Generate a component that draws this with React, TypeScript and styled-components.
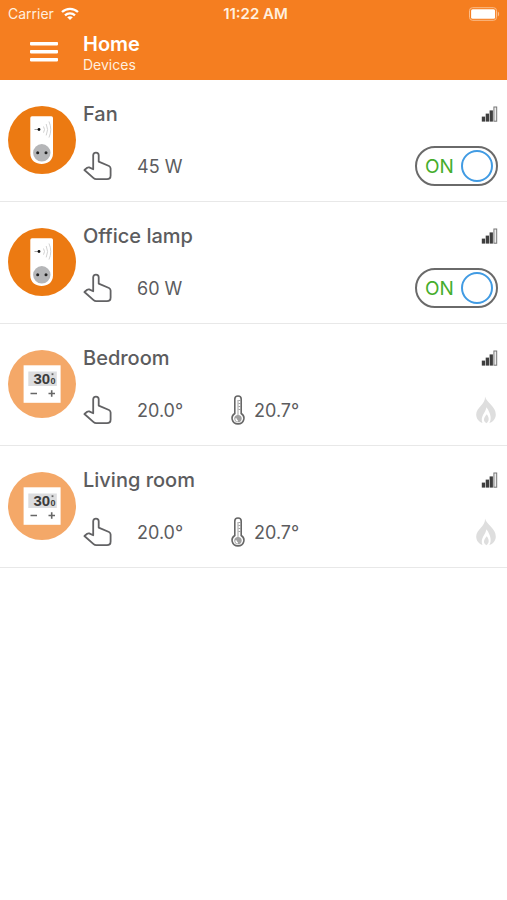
import React, { useState } from 'react';
import styled, { createGlobalStyle } from 'styled-components';

const GlobalStyle = createGlobalStyle`
  * { box-sizing: border-box; }
  body {
    margin: 0;
    background: #ffffff;
    color: #5c5c5e;
    font-family: Inter, "Liberation Sans", sans-serif;
  }
`;

const Header = styled.header`
  background: #f57e20;
  color: #ffffff;
  padding-bottom: 5px;
`;

const StatusBar = styled.div`
  display: grid;
  grid-template-columns: 1fr auto 1fr;
  align-items: center;
  height: 27px;
  padding: 0 7px 0 8px;
  font-size: 14px;
  color: #ffefdf;
`;

const Carrier = styled.div`
  display: flex;
  align-items: center;
  gap: 7px;
`;

const Clock = styled.time`
  padding-left: 3px;
  font-size: 15px;
  font-weight: 600;
`;

const BatterySlot = styled.div`
  display: flex;
  justify-content: flex-end;
`;

const TitleBar = styled.div`
  display: flex;
  align-items: center;
  height: 48px;
`;

const MenuButton = styled.button`
  display: flex;
  justify-content: center;
  width: 83px;
  padding: 2px 0 0 4px;
  border: 0;
  background: none;
  color: inherit;
  cursor: pointer;
`;

const PageTitle = styled.h1`
  margin: 0;
  font-size: 20px;
  line-height: 24px;
  font-weight: 600;
  padding-top: 3px;
`;

const PageSubtitle = styled.p`
  margin: 0;
  font-size: 14px;
  line-height: 18px;
  color: #ffefdf;
`;

const DeviceList = styled.ul`
  margin: 0;
  padding: 0;
  list-style: none;
`;

const DeviceRow = styled.li`
  display: flex;
  align-items: flex-start;
  gap: 7px;
  padding: 16px 9px 15px 8px;
  border-bottom: 1px solid #e8e8e8;
`;

const Avatar = styled.div<{ $muted: boolean }>`
  display: flex;
  align-items: center;
  justify-content: center;
  flex: none;
  width: 68px;
  height: 68px;
  margin-top: 10px;
  border-radius: 50%;
  background: ${(p) => (p.$muted ? '#f4a868' : '#ec7a12')};
`;

const DeviceBody = styled.div`
  flex: 1;
  min-width: 0;
`;

const DeviceLine = styled.div<{ $height: number }>`
  display: flex;
  align-items: center;
  justify-content: space-between;
  height: ${(p) => p.$height}px;
`;

const StatusLine = styled(DeviceLine)`
  margin-top: 14px;
`;

const DeviceName = styled.h2`
  margin: 0;
  font-size: 20px;
  font-weight: 500;
`;

const Readings = styled.div`
  display: flex;
  align-items: center;
`;

const Setting = styled.div`
  display: flex;
  align-items: center;
  gap: 25px;
  width: 148px;
  font-size: 18px;
`;

const Measured = styled.div`
  display: flex;
  align-items: center;
  gap: 9px;
  font-size: 18px;
`;

const Switch = styled.label<{ $on: boolean }>`
  position: relative;
  display: flex;
  flex-direction: ${(p) => (p.$on ? 'row' : 'row-reverse')};
  align-items: center;
  justify-content: space-between;
  width: 83px;
  height: 40px;
  padding: 0 3px 0 8px;
  border: 2px solid #6a6a6a;
  border-radius: 20px;
  color: ${(p) => (p.$on ? '#45ad2c' : '#8a8a8a')};
  font-size: 19px;
  cursor: pointer;
`;

const SwitchInput = styled.input`
  position: absolute;
  inset: 0;
  width: 100%;
  height: 100%;
  margin: 0;
  opacity: 0;
  cursor: pointer;
`;

const Knob = styled.span`
  width: 32px;
  height: 32px;
  border: 2px solid #419be3;
  border-radius: 50%;
`;

const FlameSlot = styled.div`
  display: flex;
  padding-right: 2px;
`;

const WifiIcon = () => (
  <svg width="18" height="14" viewBox="0 0 18 14" fill="none" stroke="#fff" strokeWidth="2.3" aria-hidden="true">
    <path d="M1 5C5.5 .7 12.5 .7 17 5" />
    <path d="M4 8.3C6.8 5.7 11.2 5.7 14 8.3" />
    <path d="M9 13L6.2 10.2C7.8 8.9 10.2 8.9 11.8 10.2Z" fill="#fff" stroke="none" />
  </svg>
);

const BatteryIcon = () => (
  <svg width="32" height="14" viewBox="0 0 32 14" aria-hidden="true">
    <rect x="1.5" y=".7" width="27" height="12.6" rx="3" fill="none" stroke="#fbbd8b" strokeWidth="1" />
    <rect x="3.1" y="2.3" width="24" height="9.4" rx="1.5" fill="#fff" />
    <path d="M29.8 4.5C31.6 5.3 31.6 8.7 29.8 9.5Z" fill="#fbbd8b" />
  </svg>
);

const MenuIcon = () => (
  <svg width="28" height="20" viewBox="0 0 28 20" fill="#fff" aria-hidden="true">
    <rect y="0" width="28" height="3.4" rx=".8" />
    <rect y="8" width="28" height="3.4" rx=".8" />
    <rect y="16" width="28" height="3.4" rx=".8" />
  </svg>
);

const PlugIcon = () => (
  <svg width="68" height="68" viewBox="0 0 68 68" aria-hidden="true">
    <path d="M22.3 12Q22.3 10.3 24 10.3H43.3Q45 10.3 45 12V47.5C45 61.5 22.3 61.5 22.3 47.5Z" fill="#fff" />
    <circle cx="33.8" cy="46.8" r="8.7" fill="#b5b6b8" />
    <circle cx="29.7" cy="46.8" r="1.5" fill="#222" />
    <circle cx="38" cy="46.8" r="1.5" fill="#222" />
    <path d="M26.5 23.5H31" stroke="#999" strokeWidth=".9" />
    <circle cx="31" cy="23.5" r="1.4" fill="#111" />
    <g fill="none" stroke="#cccccc" strokeWidth=".9">
      <path d="M35.5 20.5Q37.5 23.5 35.5 26.7" />
      <path d="M38.2 18Q41 23.5 38.2 29.4" />
      <path d="M41 15.5Q44.5 23.5 41 31.5" />
    </g>
  </svg>
);

const ThermostatIcon = () => (
  <svg width="68" height="68" viewBox="0 0 68 68" aria-hidden="true">
    <rect x="15.6" y="15.3" width="37" height="37.5" fill="#fff" />
    <rect x="20.3" y="21.5" width="28.5" height="14.5" fill="#dcdddf" />
    <g fontFamily="'Liberation Sans Narrow', 'Liberation Sans', sans-serif" fontWeight="700" fill="#3c3c3c">
      <text x="25.4" y="34.4" fontSize="15">30</text>
      <text x="42.6" y="34.4" fontSize="9">0</text>
    </g>
    <rect x="43.6" y="23.3" width="1.8" height="1.8" fill="#666" />
    <path d="M22.5 43.5H29M40.5 43.5H47M43.7 40.3V46.7" stroke="#666" strokeWidth="1.6" />
  </svg>
);

const HandIcon = () => (
  <svg width="29" height="30" viewBox="0 0 29 30" fill="none" stroke="#626264" strokeWidth="1.8" strokeLinejoin="round" aria-hidden="true">
    <path d="M1.4 19L4.2 16.7Q5 16.2 6.2 16.4L10.2 18.2V4.3C10.2 .6 15.7 .6 15.7 4.3V10.6L26 15Q27.6 15.8 27.6 17.6V24.5Q27.6 28.2 24 28.2H13.2Q11.7 28.2 10.6 27.2Z" />
  </svg>
);

const ThermometerIcon = () => (
  <svg width="14" height="30" viewBox="0 0 14 30" aria-hidden="true">
    <path d="M3.8 18.5V4C3.8-.1 10.2-.1 10.2 4V18.5C14.9 21.3 13.2 28.9 7 28.9S-.9 21.3 3.8 18.5Z" fill="#fff" stroke="#666" strokeWidth="1.6" />
    <path d="M7 5V21" stroke="#c4c4c4" strokeWidth="1.6" />
    <circle cx="7" cy="23.6" r="3.7" fill="#a0a0a0" />
    <path d="M4.8 23.4Q5 25.6 6.8 26" fill="none" stroke="#fff" strokeWidth="1.5" />
    <path d="M7.5 5.5H10M7.5 8.5H10M7.5 11.5H10M7.5 14.5H10" stroke="#999" strokeWidth=".9" />
  </svg>
);

const SignalIcon = () => (
  <svg width="17" height="16" viewBox="0 0 17 16" role="img" aria-label="Signal strength">
    <g fill="#3e3e3e">
      <rect x=".8" y="10.6" width="3.3" height="5" />
      <rect x="4.7" y="7.6" width="3.3" height="8" />
      <rect x="8.6" y="4.4" width="3.3" height="11.2" />
    </g>
    <rect x="12.9" y="1" width="2.8" height="14.2" fill="#eeeeee" stroke="#777" strokeWidth="1" />
  </svg>
);

const FlameIcon = () => (
  <svg width="20" height="28" viewBox="0 0 20 28" role="img" aria-label="Heating off">
    <path d="M9 .5C10.5 6.5 20 10.5 19.8 18.8C19.7 22.8 17 26 13.3 27.2C15.8 23.3 15 17.7 10.4 11.3C10 16.4 3.7 20.3 6.5 27.1C2.7 25.8 .2 22.5 .2 18.5C.2 11.5 9.8 8 9 .5Z" fill="#dedede" />
    <path d="M10.8 18.3C13.3 21.7 13.5 25 10.4 27.2C6.5 25 7.8 21.5 10.8 18.3Z" fill="#dedede" />
  </svg>
);

type Device = {
  id: string;
  name: string;
  setting: string;
  measured?: string;
};

const devices: Device[] = [
  { id: 'fan', name: 'Fan', setting: '45 W' },
  { id: 'office-lamp', name: 'Office lamp', setting: '60 W' },
  { id: 'bedroom', name: 'Bedroom', setting: '20.0°', measured: '20.7°' },
  { id: 'living-room', name: 'Living room', setting: '20.0°', measured: '20.7°' },
];

function PowerSwitch({ name }: { name: string }) {
  const [on, setOn] = useState(true);
  return (
    <Switch $on={on}>
      <SwitchInput
        type="checkbox"
        role="switch"
        aria-label={`${name} power`}
        checked={on}
        onChange={(e) => setOn(e.target.checked)}
      />
      <span>{on ? 'ON' : 'OFF'}</span>
      <Knob />
    </Switch>
  );
}

function DeviceItem({ device }: { device: Device }) {
  const isThermostat = device.measured !== undefined;
  return (
    <DeviceRow>
      <Avatar $muted={isThermostat}>{isThermostat ? <ThermostatIcon /> : <PlugIcon />}</Avatar>
      <DeviceBody>
        <DeviceLine $height={36}>
          <DeviceName>{device.name}</DeviceName>
          <SignalIcon />
        </DeviceLine>
        <StatusLine $height={40}>
          <Readings>
            <Setting>
              <HandIcon />
              <span>{device.setting}</span>
            </Setting>
            {isThermostat && (
              <Measured>
                <ThermometerIcon />
                <span>{device.measured}</span>
              </Measured>
            )}
          </Readings>
          {isThermostat ? (
            <FlameSlot>
              <FlameIcon />
            </FlameSlot>
          ) : (
            <PowerSwitch name={device.name} />
          )}
        </StatusLine>
      </DeviceBody>
    </DeviceRow>
  );
}

export default function App() {
  return (
    <>
      <GlobalStyle />
      <Header>
        <StatusBar>
          <Carrier>
            <span>Carrier</span>
            <WifiIcon />
          </Carrier>
          <Clock>11:22 AM</Clock>
          <BatterySlot>
            <BatteryIcon />
          </BatterySlot>
        </StatusBar>
        <TitleBar>
          <MenuButton type="button" aria-label="Open menu">
            <MenuIcon />
          </MenuButton>
          <div>
            <PageTitle>Home</PageTitle>
            <PageSubtitle>Devices</PageSubtitle>
          </div>
        </TitleBar>
      </Header>
      <main>
        <DeviceList>
          {devices.map((device) => (
            <DeviceItem key={device.id} device={device} />
          ))}
        </DeviceList>
      </main>
    </>
  );
}
